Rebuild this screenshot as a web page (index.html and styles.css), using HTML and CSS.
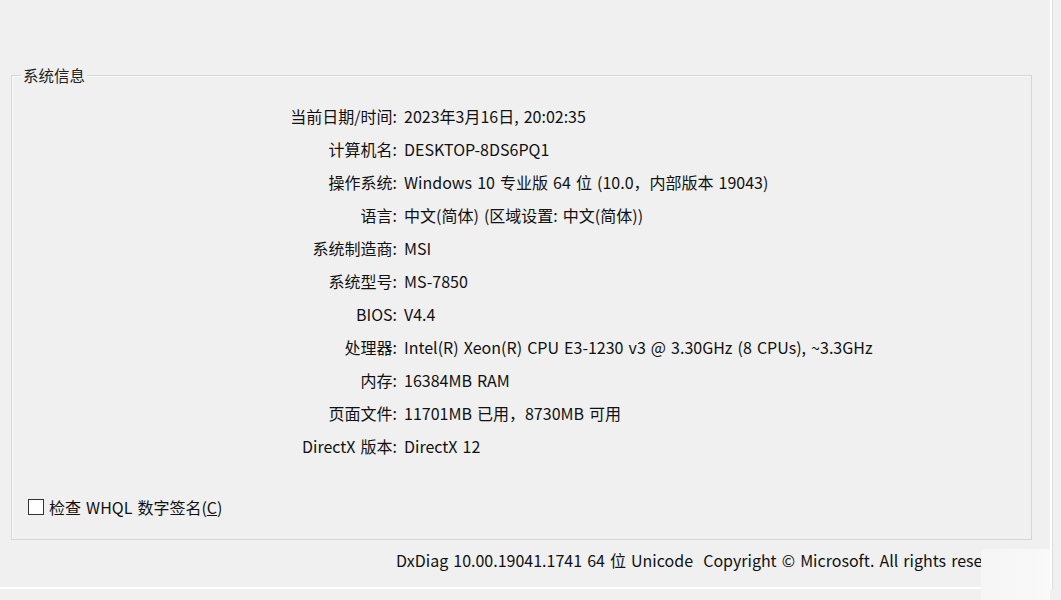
FILE: index.html
```html
<!DOCTYPE html>
<html lang="zh-CN">
<head>
<meta charset="utf-8">
<title>DirectX 诊断工具</title>
<link rel="stylesheet" href="styles.css">
</head>
<body>
<div class="page">
  <div class="main">
    <fieldset class="group">
      <legend class="group-title">系统信息</legend>
      <div class="info">
        <div class="label">当前日期/时间:</div><div class="value">2023年3月16日, 20:02:35</div>
        <div class="label">计算机名:</div><div class="value">DESKTOP-8DS6PQ1</div>
        <div class="label">操作系统:</div><div class="value">Windows 10 专业版 64 位 (10.0，内部版本 19043)</div>
        <div class="label">语言:</div><div class="value">中文(简体) (区域设置: 中文(简体))</div>
        <div class="label">系统制造商:</div><div class="value">MSI</div>
        <div class="label">系统型号:</div><div class="value">MS-7850</div>
        <div class="label">BIOS:</div><div class="value">V4.4</div>
        <div class="label">处理器:</div><div class="value">Intel(R) Xeon(R) CPU E3-1230 v3 @ 3.30GHz (8 CPUs), ~3.3GHz</div>
        <div class="label">内存:</div><div class="value">16384MB RAM</div>
        <div class="label">页面文件:</div><div class="value">11701MB 已用，8730MB 可用</div>
        <div class="label">DirectX 版本:</div><div class="value">DirectX 12</div>
      </div>
      <label class="check">
        <input type="checkbox" class="check-box">
        <span>检查 WHQL 数字签名(<u>C</u>)</span>
      </label>
    </fieldset>
    <div class="footer">DxDiag 10.00.19041.1741 64 位 Unicode&nbsp; Copyright © Microsoft. All rights reserved.</div>
  </div>
  <div class="mask"></div>
</div>
</body>
</html>
```

FILE: styles.css
```css
html, body {
  margin: 0;
  padding: 0;
}
body {
  background: #f0f0f0;
  font-family: "Noto Sans CJK SC", "Noto Sans", sans-serif;
  font-size: 16px;
  word-spacing: 1.5px;
  color: #111;
  overflow: hidden;
}
.page {
  position: relative;
  width: 1061px;
  height: 600px;
  overflow: hidden;
}
.main {
  box-sizing: border-box;
  width: 1052px;
  height: 589px;
  padding: 65px 0 0 11px;
  border-right: 2px solid #ffffff;
  border-bottom: 2px solid #ffffff;
  box-shadow: 1px 0 0 #dcdcdc;
  overflow: hidden;
}
.group {
  box-sizing: border-box;
  width: 1021px;
  margin: 0;
  padding: 14px 0 22px 9px;
  border: 1px solid #d6d6d6;
  box-shadow: inset 1px 1px 0 #fafafa;
  min-width: 0;
}
.group-title {
  padding: 0 2px;
  line-height: 20px;
  font-size: 15.5px;
  color: #222;
}
.info {
  display: grid;
  grid-template-columns: 376px 1fr;
  column-gap: 7px;
  grid-auto-rows: 33px;
  align-items: center;
}
.label {
  text-align: right;
  white-space: nowrap;
}
.value {
  white-space: nowrap;
}
.check {
  display: flex;
  align-items: center;
  gap: 5px;
  margin: 35px 0 0 7px;
  line-height: 20px;
}
.check-box {
  appearance: none;
  -webkit-appearance: none;
  box-sizing: border-box;
  width: 16px;
  height: 16px;
  margin: 0;
  border: 1px solid #333;
  background: #ffffff;
}
.footer {
  margin-top: 10px;
  padding-left: 385px;
  line-height: 20px;
  white-space: nowrap;
  color: #111;
}
.mask {
  position: absolute;
  left: 981px;
  top: 549px;
  width: 69px;
  height: 51px;
  background: linear-gradient(90deg, #f5f5f5, #f9f9f9);
}
```
